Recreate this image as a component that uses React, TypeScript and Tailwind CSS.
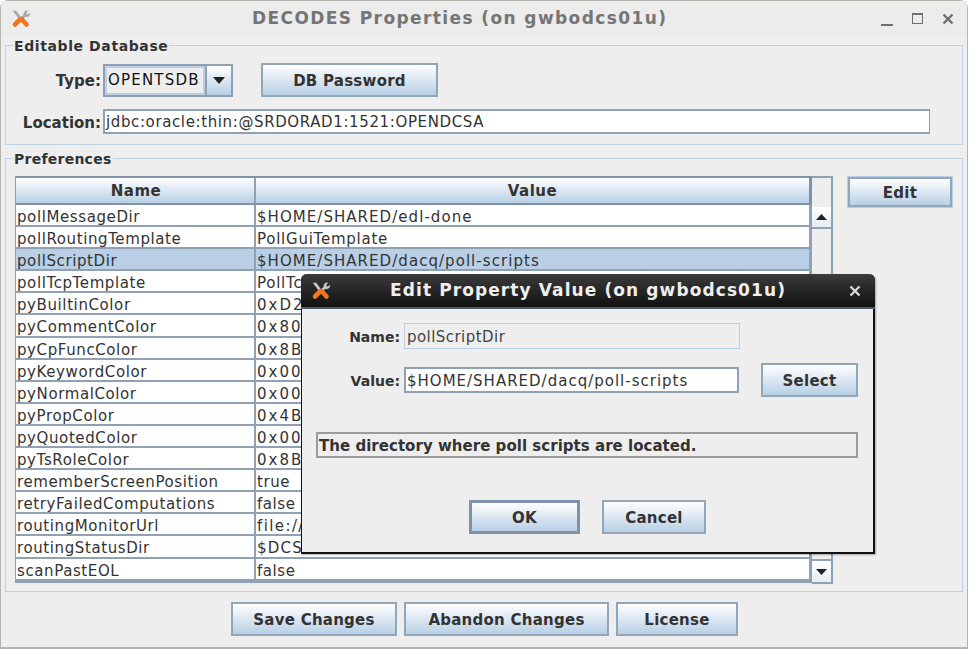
import React from 'react';

const wideValue = 'tracking-[1.05px]';
const hexValue = 'tracking-[2px]';

const rows = [
  ['pollMessageDir', '$HOME/SHARED/edl-done', wideValue],
  ['pollRoutingTemplate', 'PollGuiTemplate', 'tracking-[0.75px]'],
  ['pollScriptDir', '$HOME/SHARED/dacq/poll-scripts', 'tracking-[1.05px]'],
  ['pollTcpTemplate', 'PollTc', 'tracking-[0.75px]'],
  ['pyBuiltinColor', '0xD2', hexValue],
  ['pyCommentColor', '0x80', hexValue],
  ['pyCpFuncColor', '0x8B', hexValue],
  ['pyKeywordColor', '0x00', hexValue],
  ['pyNormalColor', '0x00', hexValue],
  ['pyPropColor', '0x4B', hexValue],
  ['pyQuotedColor', '0x00', hexValue],
  ['pyTsRoleColor', '0x8B', hexValue],
  ['rememberScreenPosition', 'true', 'tracking-[0.55px]'],
  ['retryFailedComputations', 'false', 'tracking-[0.55px]'],
  ['routingMonitorUrl', 'file://', 'tracking-[1.4px]'],
  ['routingStatusDir', '$DCS', 'tracking-[1.2px]'],
  ['scanPastEOL', 'false', 'tracking-[0.55px]'],
];

function ToolsIcon({ className, metal }: { className?: string; metal: string }) {
  return (
    <svg viewBox="0 0 20 18" className={className}>
      {/* screwdriver blade, upper left */}
      <path d="M2 1 L5 0.5 L9.5 6.5 L7.5 8.5 Z" fill={metal} />
      {/* wrench head, upper right */}
      <path d="M17 0.5 L15.2 3.4 L16.4 4.6 L19 3 C19.4 6 16.6 7.6 14.6 6.8 L11 10 L9.2 8 L12.6 4.8 C12.2 2.6 14.4 0 17 0.5 Z" fill={metal} />
      <path d="M9 9.5 L4 14.5" stroke="#f2751f" strokeWidth="4.6" strokeLinecap="round" />
      <path d="M10.5 9 L15.5 14.5" stroke="#f2751f" strokeWidth="4.6" strokeLinecap="round" />
    </svg>
  );
}

function SwingButton({ label, className, heavy }: { label: string; className: string; heavy?: boolean }) {
  return (
    <button
      className={`flex items-center justify-center pt-[3px] font-bold text-[15px] tracking-[0.25px] text-[#333] bg-gradient-to-b from-white to-[#b8cfe5] ${heavy ? 'border-[3px] border-[#7f93a8]' : 'border-2 border-[#92a6ba]'} ${className}`}
    >
      {label}
    </button>
  );
}

function Dialog() {
  return (
    <div className="absolute left-[301px] top-[274px] w-[574px] h-[280px] flex flex-col bg-[#eeeeee] rounded-t-md border-r-2 border-b-2 border-l border-[#111] shadow-[1px_1px_2px_rgba(0,0,0,0.3)]">
      <div className="h-[35px] -ml-px -mr-[2px] shrink-0 rounded-t-md flex items-center bg-gradient-to-b from-[#3c3c3c] to-[#111] border-b-2 border-[#4a5a6c]">
        <ToolsIcon metal="#c9c9c9" className="w-[20px] h-[18px] ml-[10px]" />
        <span className="ml-[59px] pt-[1px] font-bold text-[17px] tracking-[1.1px] text-[#eeeeee] whitespace-nowrap">Edit Property Value (on gwbodcs01u)</span>
        <svg viewBox="0 0 12 12" className="w-[12px] h-[12px] ml-[63px]">
          <path d="M1.5 1.5 L10.5 10.5 M10.5 1.5 L1.5 10.5" stroke="#d8d8d8" strokeWidth="2.4" />
        </svg>
      </div>
      <div className="flex flex-col">
        <div className="flex items-center mt-[14px] h-[26px]">
          <span className="w-[100px] pt-[2px] pr-[2px] text-right font-bold text-[14px] text-[#333]">Name:</span>
          <div className="ml-[2px] w-[336px] h-[26px] border border-[#b8cfe5] pl-[2px] pt-[2px] flex items-center text-[15px] tracking-[0.45px] text-[#444]">pollScriptDir</div>
        </div>
        <div className="flex items-center mt-[14px] h-[34px]">
          <span className="w-[100px] pt-[2px] pr-[2px] text-right font-bold text-[14px] text-[#333]">Value:</span>
          <div className="ml-[2px] w-[335px] h-[26px] bg-white border-2 border-[#8fa1b3] pl-[1px] pt-[2px] flex items-center text-[15px] tracking-[1px] text-[#333] whitespace-nowrap">$HOME/SHARED/dacq/poll-scripts</div>
          <SwingButton label="Select" className="ml-[22px] w-[97px] h-[34px]" />
        </div>
        <div className="mt-[35px] ml-[14px] w-[542px] h-[26px] border-2 border-[#9c9c9c] pl-[1px] pt-[2px] flex items-center font-bold text-[15px] tracking-[0.03px] text-[#333]">The directory where poll scripts are located.</div>
        <div className="flex mt-[42px] ml-[167px] gap-[22px]">
          <SwingButton label="OK" heavy className="w-[111px] h-[34px]" />
          <SwingButton label="Cancel" className="w-[104px] h-[34px]" />
        </div>
      </div>
    </div>
  );
}

export default function App() {
  return (
    <div className="relative w-[972px] h-[650px] bg-white overflow-hidden font-['DejaVu_Sans',sans-serif]">
      <div className="w-[968px] h-[649px] flex flex-col bg-[#eeeeee] rounded-t-lg border border-b-2 border-[#b5b5b0]">
        {/* Title bar */}
        <div className="h-[35px] shrink-0 flex items-center bg-[#ececec]">
          <ToolsIcon metal="#a8a8a8" className="w-[20px] h-[18px] ml-[10px]" />
          <span className="ml-[221px] font-bold text-[17px] tracking-[1.4px] text-[#757575] whitespace-nowrap">DECODES Properties (on gwbodcs01u)</span>
          <div className="ml-[214px] flex items-center">
            <div className="w-[12px] h-[2px] mt-[12px] bg-[#6f6f6f]" />
            <div className="w-[11px] h-[11px] ml-[19px] border border-t-2 border-[#6f6f6f]" />
            <svg viewBox="0 0 12 12" className="w-[12px] h-[12px] ml-[19px]">
              <path d="M1.5 1.5 L10.5 10.5 M10.5 1.5 L1.5 10.5" stroke="#6f6f6f" strokeWidth="2.4" />
            </svg>
          </div>
        </div>

        <div className="flex flex-col pl-[4px] pr-[4px]">
          {/* Editable Database */}
          <fieldset className="w-[958px] h-[109px] border border-[#bcd0e4]">
            <legend className="ml-[7px] px-[1px] h-[18px] leading-[20px] font-bold text-[14px] tracking-[0.6px] text-[#333]">Editable Database</legend>
            <div className="flex items-center h-[34px] mt-[9px]">
              <span className="w-[97px] pt-[3px] pr-[2px] text-right font-bold text-[15px] text-[#333]">Type:</span>
              <div className="w-[130px] h-[33px] flex border-2 border-[#8fa1b3]">
                <div className="flex-1 border-2 border-[#b8cfe5] flex items-center pl-[1px] text-[15px] tracking-[1.2px] text-[#111]">OPENTSDB</div>
                <div className="w-[26px] flex items-center justify-center border-l-2 border-[#8fa1b3] bg-gradient-to-b from-white to-[#b8cfe5]">
                  <svg viewBox="0 0 12 7" className="w-[12px] h-[7px]"><path d="M0 0 H12 L6 7 Z" fill="#222" /></svg>
                </div>
              </div>
              <SwingButton label="DB Password" className="ml-[28px] w-[177px] h-[34px]" />
            </div>
            <div className="flex items-center h-[25px] mt-[12px]">
              <span className="w-[97px] pt-[3px] pr-[2px] text-right font-bold text-[15px] text-[#333]">Location:</span>
              <div className="w-[827px] h-[25px] bg-white border-t-2 border-l-2 border-b-2 border-r border-[#8fa1b3] flex items-center pl-[1px] pt-[2px] text-[15px] tracking-[0.62px] text-[#333] whitespace-nowrap">jdbc:oracle:thin:@SRDORAD1:1521:OPENDCSA</div>
            </div>
          </fieldset>

          {/* Preferences */}
          <fieldset className="mt-[4px] w-[958px] h-[443px] border border-[#bcd0e4]">
            <legend className="ml-[7px] px-[1px] h-[18px] leading-[20px] font-bold text-[14px] tracking-[0.25px] text-[#333]">Preferences</legend>
            <div className="flex items-start mt-[9px] ml-[9px]">
              <div className="w-[797px] border-l border-[#8fa1b3]">
                <div className="flex h-[29px] border-t-2 border-b-2 border-r-[3px] border-[#7f93a8] bg-gradient-to-b from-white to-[#b8cfe5]">
                  <div className="w-[240px] pt-[2px] pl-[2px] flex items-center justify-center border-r-2 border-[#8fa1b3] font-bold text-[15px] tracking-[0.5px] text-[#333]">Name</div>
                  <div className="flex-1 pt-[2px] flex items-center justify-center font-bold text-[15px] tracking-[0.5px] text-[#333]">Value</div>
                </div>
                {rows.map(([name, value, valueTracking], i) => (
                  <div key={name} className={`flex h-[22.1px] border-b-2 border-r-[3px] border-[#8fa1b3] text-[15px] leading-[24px] text-[#333] whitespace-nowrap ${i === 2 ? 'bg-[#b8cfe5]' : 'bg-white'}`}>
                    <div className="w-[240px] pl-[1px] border-r-2 border-[#8fa1b3] tracking-[0.6px]">{name}</div>
                    <div className={`flex-1 pl-[1px] ${valueTracking}`}>{value}</div>
                  </div>
                ))}
                <div className="h-[2px] border-b-2 border-r-[3px] border-[#8fa1b3]" />
              </div>
              {/* Scrollbar */}
              <div className="w-[21px] h-[408px] flex flex-col border-t-2 border-r-2 border-b-2 border-[#8fa1b3] bg-[#eeeeee]">
                <div className="h-[29px] shrink-0" />
                <div className="h-[20px] shrink-0 bg-gradient-to-b from-white to-[#e6ecf2] flex items-center justify-center">
                  <svg viewBox="0 0 11 6" className="w-[11px] h-[6px]"><path d="M5.5 0 L11 6 H0 Z" fill="#222" /></svg>
                </div>
                <div className="flex-1 border-t-2 border-b-2 border-[#8fa1b3] bg-[#eeeeee]" />
                <div className="h-[21px] shrink-0 bg-gradient-to-b from-white to-[#e6ecf2] flex items-center justify-center">
                  <svg viewBox="0 0 11 6" className="w-[11px] h-[6px]"><path d="M0 0 H11 L5.5 6 Z" fill="#222" /></svg>
                </div>
              </div>
              <div className="ml-[14px] border border-[#b8cfe5]">
                <SwingButton label="Edit" className="w-[104px] h-[30px]" />
              </div>
            </div>
          </fieldset>

          {/* Bottom buttons */}
          <div className="flex mt-[10px] ml-[226px] gap-[7px]">
            <SwingButton label="Save Changes" className="w-[166px] h-[34px]" />
            <SwingButton label="Abandon Changes" className="w-[205px] h-[34px]" />
            <SwingButton label="License" className="w-[122px] h-[34px]" />
          </div>
        </div>
      </div>
      <Dialog />
    </div>
  );
}
